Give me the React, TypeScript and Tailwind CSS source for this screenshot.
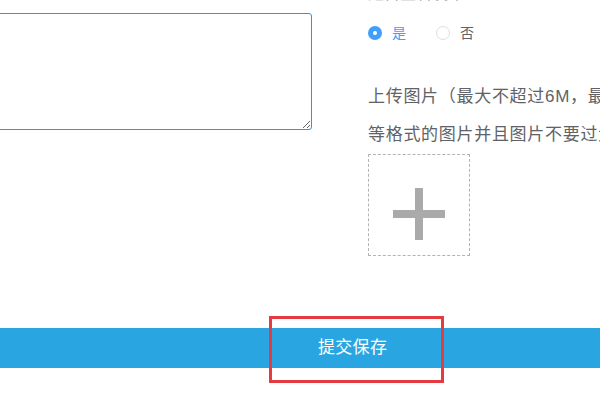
export default function App() {
  return (
    <div
      className="relative w-[600px] h-[400px] overflow-hidden bg-white text-[#606266]"
      style={{ fontFamily: '"Liberation Sans", "Noto Sans CJK SC", sans-serif' }}
    >
      <div className="flex">
        {/* left column */}
        <div className="w-[368px] shrink-0 pr-[56px]">
          <textarea
            className="block -ml-[20px] mt-[13px] w-[332px] h-[117px] rounded-[3px] border border-[#3b8fe6] bg-white outline-none resize"
            defaultValue=""
          />
        </div>

        {/* right column */}
        <div className="flex-1 min-w-0 whitespace-nowrap">
          <div className="-mt-[16px] h-[20px] text-[16px] leading-[20px] text-[#909399]">是否匿名发布：</div>
          <div className="mt-[22px] flex items-center h-[14px] text-[14px]">
            <span className="flex items-center gap-[10px] text-[#409eff]">
              <span className="flex items-center justify-center w-[14px] h-[14px] rounded-full bg-[#409eff]">
                <span className="w-[4px] h-[4px] rounded-full bg-white" />
              </span>
              是
            </span>
            <span className="ml-[30px] flex items-center gap-[10px] text-[#606266]">
              <span className="w-[14px] h-[14px] rounded-full border border-[#dcdfe6] bg-white" />
              否
            </span>
          </div>
          <div className="mt-[38px] text-[17px] tracking-[0.7px] leading-[38px]">
            <p>上传图片（最大不超过6M，最多上传1张，支持jpg、png</p>
            <p>等格式的图片并且图片不要过大）</p>
          </div>
          <div className="w-[102px] h-[102px] border border-dashed border-[#b3b3b3] flex items-center justify-center pt-[18px]">
            <svg width="52" height="52" viewBox="0 0 52 52">
              <rect x="22" y="0" width="8" height="52" fill="#aaaaaa" />
              <rect x="0" y="22" width="52" height="8" fill="#aaaaaa" />
            </svg>
          </div>
        </div>
      </div>

      {/* submit bar */}
      <div className="mt-[72px] h-[40px] bg-[#29a6e1] flex items-center pl-[318px]">
        <span className="text-white text-[17px] tracking-[0.3px]">提交保存</span>
      </div>

      {/* annotation */}
      <div className="absolute left-[269px] top-[316px] w-[175px] h-[67px] border-[3px] border-[#e53a3f]" />
    </div>
  )
}
